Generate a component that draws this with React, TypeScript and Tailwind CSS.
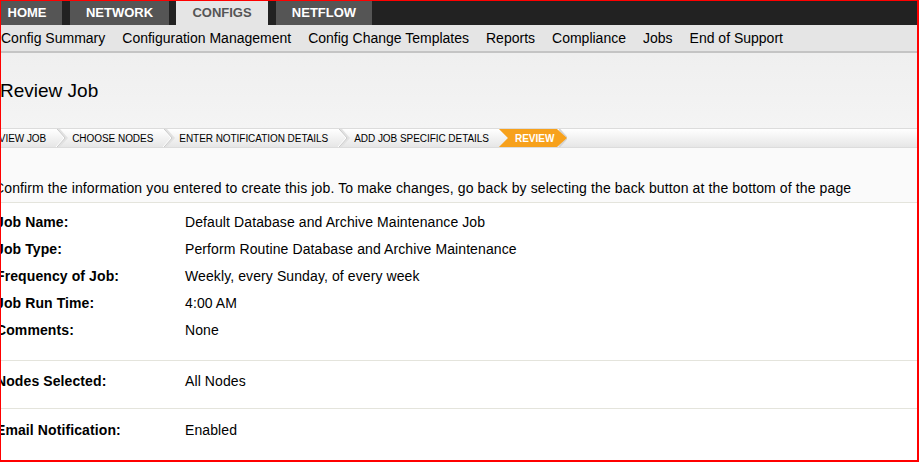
import React from "react";

const font = { fontFamily: '"Liberation Sans", Arial, sans-serif' };

function Chevron() {
  return (
    <svg width="26" height="18" viewBox="0 0 26 18" className="shrink-0">
      <polyline points="12,0 20,9 12,18" fill="none" stroke="#e2e2e2" strokeWidth="3" />
      <polyline points="11,0 19,9 11,18" fill="none" stroke="#c9c9c9" strokeWidth="1" />
      <polyline points="10,0 18,9 10,18" fill="none" stroke="#ffffff" strokeWidth="1" />
    </svg>
  );
}

const rows1 = [
  ["Job Name:", "Default Database and Archive Maintenance Job"],
  ["Job Type:", "Perform Routine Database and Archive Maintenance"],
  ["Frequency of Job:", "Weekly, every Sunday, of every week"],
  ["Job Run Time:", "4:00 AM"],
  ["Comments:", "None"],
];

function Row({ label, value }: { label: string; value: string }) {
  return (
    <div className="flex items-center h-[27px] text-[14px] leading-[16px] tracking-[0.1px] text-black">
      <div className="w-[189px] shrink-0 font-bold -ml-[5px] whitespace-nowrap">{label}</div>
      <div className="whitespace-nowrap">{value}</div>
    </div>
  );
}

export default function App() {
  const tabs = [
    { t: "HOME", w: "w-[70px]", ml: "-ml-[9px]", active: false },
    { t: "NETWORK", w: "w-[99px]", ml: "ml-[8px]", active: false },
    { t: "CONFIGS", w: "w-[92px]", ml: "ml-[7px]", active: true },
    { t: "NETFLOW", w: "w-[96px]", ml: "ml-[8px]", active: false },
  ];
  const sub = [
    "Config Summary",
    "Configuration Management",
    "Config Change Templates",
    "Reports",
    "Compliance",
    "Jobs",
    "End of Support",
  ];
  return (
    <div className="w-[919px] h-[462px] bg-white overflow-hidden" style={font}>
      <div className="w-[919px] h-[462px] border-t border-l border-r-2 border-b-2 border-[#ff0000] overflow-hidden flex flex-col">
        {/* top tabs */}
        <div className="h-[24px] bg-[#222222] flex shrink-0">
          {tabs.map((tab) => (
            <div
              key={tab.t}
              className={`${tab.w} ${tab.ml} shrink-0 flex items-center justify-center text-[13px] font-bold ${
                tab.active ? "bg-[#e5e5e5] text-[#555555]" : "bg-[#555555] text-white"
              }`}
            >
              {tab.t}
            </div>
          ))}
        </div>
        {/* sub nav */}
        <div className="h-[26px] bg-[#e5e5e5] flex items-center gap-[17px] text-[14px] text-black shrink-0">
          {sub.map((s) => (
            <span key={s} className="whitespace-nowrap">{s}</span>
          ))}
        </div>
        <div className="h-[2px] bg-[#c4c4c4] shrink-0" />
        {/* title area */}
        <div className="h-[75px] bg-gradient-to-b from-[#efefef] to-[#f4f4f4] flex items-center shrink-0">
          <h1 className="text-[19px] text-black leading-none -ml-[1px]">Review Job</h1>
        </div>
        {/* breadcrumb */}
        <div className="h-[20px] border-t border-b border-[#dcdcdc] bg-gradient-to-b from-[#ffffff] to-[#e6e6e6] flex items-center text-[10px] tracking-[-0.05px] text-black whitespace-nowrap shrink-0">
          <span className="-ml-[16px]">REVIEW JOB</span>
          <Chevron />
          <span>CHOOSE NODES</span>
          <Chevron />
          <span>ENTER NOTIFICATION DETAILS</span>
          <Chevron />
          <span>ADD JOB SPECIFIC DETAILS</span>
          <div className="w-[10px] shrink-0" />
          <div className="flex items-center h-[18px]">
            <div className="w-[68px] h-[18px] bg-[#f7a11c] text-white font-bold tracking-normal flex items-center pl-[16px] [clip-path:polygon(0_0,58px_0,68px_50%,58px_100%,0_100%,9px_50%)]">
              REVIEW
            </div>
            <svg width="8" height="18" viewBox="0 0 8 18" className="-ml-[8px] shrink-0">
              <polyline points="0,0 8,9 0,18" fill="none" stroke="#d4d4d4" strokeWidth="2" />
            </svg>
          </div>
        </div>
        {/* instructions */}
        <div className="h-[54px] bg-[#fafafa] flex items-end pb-[6px] shrink-0">
          <p className="-ml-[7px] text-[14px] leading-[16px] tracking-[0.12px] text-black whitespace-nowrap">
            Confirm the information you entered to create this job. To make changes, go back by selecting the back button at the bottom of the page
          </p>
        </div>
        <div className="h-[1px] bg-[#e4e4dc] shrink-0" />
        {/* details */}
        <div className="pt-[5px] pb-[17px]">
          {rows1.map(([l, v]) => (
            <Row key={l} label={l} value={v} />
          ))}
        </div>
        <div className="h-[1px] bg-[#e4e4dc] shrink-0" />
        <div className="pt-[6px] pb-[14px]">
          <Row label="Nodes Selected:" value="All Nodes" />
        </div>
        <div className="h-[1px] bg-[#e4e4dc] shrink-0" />
        <div className="pt-[7px]">
          <Row label="Email Notification:" value="Enabled" />
        </div>
      </div>
    </div>
  );
}
